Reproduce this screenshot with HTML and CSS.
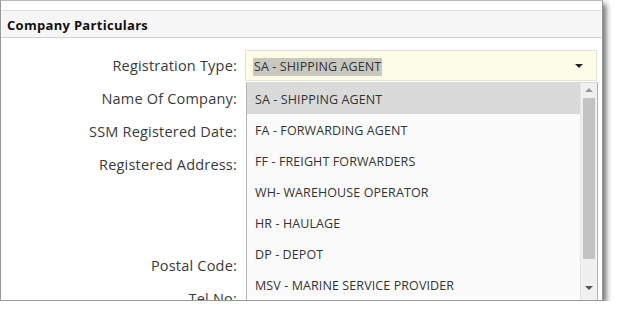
FILE: index.html
```html
<!DOCTYPE html>
<html>
<head>
<meta charset="utf-8">
<link rel="stylesheet" href="styles.css">
</head>
<body>
<div class="frame">
  <div class="panel-head">Company Particulars</div>
  <div class="form">
    <div class="row">
      <div class="label">Registration Type:</div>
      <div class="select">
        <span class="sel-text">SA - SHIPPING AGENT</span>
        <span class="caret"></span>
      </div>
    </div>
    <div class="row">
      <div class="label">Name Of Company:</div>
      <div class="field"></div>
    </div>
    <div class="row">
      <div class="label">SSM Registered Date:</div>
      <div class="field"></div>
    </div>
    <div class="row row-tall">
      <div class="label">Registered Address:</div>
      <div class="field field-tall"></div>
    </div>
    <div class="row">
      <div class="label">Postal Code:</div>
      <div class="field"></div>
    </div>
    <div class="row">
      <div class="label">Tel No:</div>
      <div class="field"></div>
    </div>

    <div class="dropdown">
      <ul class="options">
        <li class="opt active">SA - SHIPPING AGENT</li>
        <li class="opt">FA - FORWARDING AGENT</li>
        <li class="opt">FF - FREIGHT FORWARDERS</li>
        <li class="opt">WH- WAREHOUSE OPERATOR</li>
        <li class="opt">HR - HAULAGE</li>
        <li class="opt">DP - DEPOT</li>
        <li class="opt">MSV - MARINE SERVICE PROVIDER</li>
      </ul>
      <div class="scrollbar">
        <span class="arrow up"></span>
        <span class="thumb"></span>
        <span class="arrow down"></span>
      </div>
    </div>
  </div>
</div>
</body>
</html>
```
FILE: styles.css
```css
html, body {
  margin: 0;
  padding: 0;
  background: #ffffff;
}
body {
  font-family: "Open Sans", "Noto Sans", sans-serif;
}
.frame {
  width: 601px;
  height: 299px;
  border: 1px solid #9a9a9a;
  border-top-color: #b8b8b8;
  background: #ffffff;
  box-shadow: 3px 4px 6px rgba(0, 0, 0, 0.6);
  overflow: hidden;
  box-sizing: content-box;
}
.panel-head {
  margin-top: 9px;
  height: 26px;
  border-top: 1px solid #e0e0e0;
  border-bottom: 1px solid #d2d2d2;
  background: #f6f6f6;
  padding-left: 6px;
  font-size: 13px;
  font-weight: 700;
  color: #111;
  line-height: 28px;
  letter-spacing: 0.3px;
}
.form {
  position: relative;
  padding-top: 12px;
  display: flex;
  flex-direction: column;
  gap: 2px;
}
.row {
  display: grid;
  grid-template-columns: 236px 352px;
  column-gap: 8px;
  height: 31px;
}
.row-tall {
  height: 99px;
}
.label {
  text-align: right;
  font-size: 14.5px;
  color: #3a3a3a;
  line-height: 32px;
  height: 31px;
  letter-spacing: 0.2px;
}
.select {
  height: 29px;
  border: 1px solid #e4e4d4;
  background: #fdfde7;
  display: flex;
  align-items: center;
  padding-left: 7px;
  padding-right: 13px;
  justify-content: space-between;
}
.sel-text {
  background: #c8c8bf;
  font-size: 12.5px;
  color: #333;
  line-height: 18px;
  padding: 0 1px;
  margin-top: 2px;
  letter-spacing: 0.1px;
}
.caret {
  width: 0;
  height: 0;
  border-left: 4px solid transparent;
  border-right: 4px solid transparent;
  border-top: 4px solid #222;
}
.field {
  height: 29px;
}
.field-tall {
  height: 97px;
}
.dropdown {
  position: absolute;
  left: 245px;
  top: 44px;
  width: 350px;
  height: 222px;
  border: 1px solid #b4b4b4;
  border-top-color: #d8d8d8;
  background: #fbfbfb;
  display: flex;
}
.options {
  list-style: none;
  margin: 0;
  padding: 0;
  flex: 1;
}
.opt {
  height: 31px;
  line-height: 33px;
  padding-left: 8px;
  font-size: 12.5px;
  color: #333;
  letter-spacing: 0.1px;
}
.opt.active {
  background: #dadada;
}
.scrollbar {
  width: 16px;
  background: #f0f0f0;
  border-left: 1px solid #e6e6e6;
  display: flex;
  flex-direction: column;
  align-items: center;
}
.thumb {
  width: 12px;
  height: 161px;
  background: #c3c3c3;
  margin-top: 6px;
}
.arrow {
  width: 0;
  height: 0;
  border-left: 4px solid transparent;
  border-right: 4px solid transparent;
}
.arrow.up {
  margin-top: 5px;
  border-bottom: 4px solid #9a9a9a;
}
.arrow.down {
  margin-top: 27px;
  border-top: 4px solid #555;
}
```
